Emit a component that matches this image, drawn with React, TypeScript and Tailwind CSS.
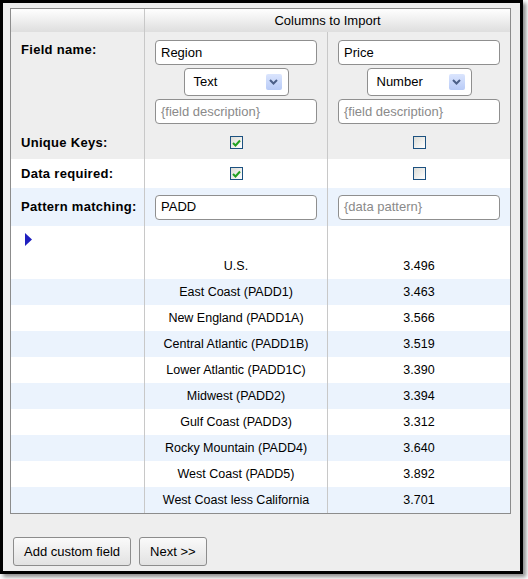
import React from 'react';

const rows: [string, string][] = [
  ['U.S.', '3.496'],
  ['East Coast (PADD1)', '3.463'],
  ['New England (PADD1A)', '3.566'],
  ['Central Atlantic (PADD1B)', '3.519'],
  ['Lower Atlantic (PADD1C)', '3.390'],
  ['Midwest (PADD2)', '3.394'],
  ['Gulf Coast (PADD3)', '3.312'],
  ['Rocky Mountain (PADD4)', '3.640'],
  ['West Coast (PADD5)', '3.892'],
  ['West Coast less California', '3.701'],
];

const TextBox = ({ value, placeholder }: { value?: string; placeholder?: string }) => (
  <div className="mx-[10px] flex h-[25px] items-center rounded-[4px] border border-[#8f8f8f] bg-white px-[5px] text-[13px]">
    {value ? <span className="text-black">{value}</span> : <span className="text-[#8a8a8a]">{placeholder}</span>}
  </div>
);

const Select = ({ value }: { value: string }) => (
  <div className="mx-auto flex h-[28px] w-[105px] items-center justify-between rounded-[4px] border border-[#8f8f8f] bg-white pl-[9px] pr-[6px] text-[13px]">
    <span>{value}</span>
    <span className="flex h-[16px] w-[16px] items-center justify-center rounded-[2px] bg-gradient-to-b from-[#dbe5fd] to-[#b8cbf7]">
      <svg width="9" height="6" viewBox="0 0 9 6">
        <path d="M1 1 L4.5 4.5 L8 1" fill="none" stroke="#4b5f88" strokeWidth="2" />
      </svg>
    </span>
  </div>
);

const Check = ({ checked }: { checked?: boolean }) => (
  <span className="flex h-[13px] w-[13px] items-center justify-center border border-[#1c5180] bg-gradient-to-br from-[#dcdcd6] to-white">
    {checked && (
      <svg width="9" height="8" viewBox="0 0 9 8">
        <path d="M1 4 L3.5 6.5 L8 1.5" fill="none" stroke="#21a121" strokeWidth="2" />
      </svg>
    )}
  </span>
);

const Label = ({ children, top, bg }: { children: React.ReactNode; top?: boolean; bg: string }) => (
  <div
    className={`border-r border-[#c8c8c8] pl-[10px] text-[13px] font-bold tracking-[0.3px] ${bg} ${top ? 'pt-[8px]' : 'flex items-center'}`}
  >
    {children}
  </div>
);

export default function App() {
  return (
    <div className="h-[579px] w-[528px] bg-white" style={{ fontFamily: '"Liberation Sans", Arial, sans-serif' }}>
      <div className="flex h-[574px] w-[523px] flex-col border-[3px] border-black bg-[#eeeeee] shadow-[3px_3px_4px_rgba(0,0,0,0.45)]">
        <div className="ml-[7px] mt-[5px] w-[501px] border border-[#8c8c8c] bg-white text-black">
          {/* header */}
          <div className="grid h-[23px] grid-cols-[134px_365px] bg-gradient-to-b from-white to-[#dedede]">
            <div className="border-r border-[#c8c8c8]" />
            <div className="flex items-center justify-center text-[13px]">Columns to Import</div>
          </div>

          <div className="grid grid-cols-[134px_183px_182px]">
            {/* field name */}
            <Label top bg="bg-[#eeeeee]">Field name:</Label>
            <div className="flex flex-col gap-[3px] border-r border-[#c8c8c8] bg-[#eeeeee] pb-[2px] pt-[8px]">
              <TextBox value="Region" />
              <Select value="Text" />
              <TextBox placeholder="{field description}" />
            </div>
            <div className="flex flex-col gap-[3px] bg-[#eeeeee] pb-[2px] pt-[8px]">
              <TextBox value="Price" />
              <Select value="Number" />
              <TextBox placeholder="{field description}" />
            </div>

            {/* unique keys */}
            <Label bg="bg-[#eeeeee]">Unique Keys:</Label>
            <div className="flex h-[33px] items-center justify-center border-r border-[#c8c8c8] bg-[#eeeeee]">
              <Check checked />
            </div>
            <div className="flex h-[33px] items-center justify-center bg-[#eeeeee]">
              <Check />
            </div>

            {/* data required */}
            <Label bg="bg-white">Data required:</Label>
            <div className="flex h-[29px] items-center justify-center border-r border-[#c8c8c8]">
              <Check checked />
            </div>
            <div className="flex h-[29px] items-center justify-center">
              <Check />
            </div>

            {/* pattern */}
            <Label bg="bg-[#ebf3fd]">Pattern matching:</Label>
            <div className="flex h-[38px] flex-col justify-center border-r border-[#c8c8c8] bg-[#ebf3fd]">
              <TextBox value="PADD" />
            </div>
            <div className="flex h-[38px] flex-col justify-center bg-[#ebf3fd]">
              <TextBox placeholder="{data pattern}" />
            </div>

            {/* arrow */}
            <div className="h-[27px] border-r border-[#c8c8c8] pl-[14px] pt-[7px]">
              <svg width="7" height="13" viewBox="0 0 7 13">
                <path d="M0 0 L7 6.5 L0 13 Z" fill="#1f1fbf" />
              </svg>
            </div>
            <div className="border-r border-[#c8c8c8]" />
            <div />

            {rows.map(([name, price], i) => {
              const bg = i % 2 === 1 ? 'bg-[#ebf3fd]' : 'bg-white';
              return (
                <React.Fragment key={name}>
                  <div className={`h-[26px] border-r border-[#c8c8c8] ${bg}`} />
                  <div className={`flex h-[26px] items-center justify-center border-r border-[#c8c8c8] text-[12.5px] ${bg}`}>
                    {name}
                  </div>
                  <div className={`flex h-[26px] items-center justify-center text-[12.5px] ${bg}`}>{price}</div>
                </React.Fragment>
              );
            })}
          </div>
        </div>

        <div className="ml-[10px] mt-[23px] flex gap-[8px]">
          <button className="h-[29px] rounded-[3px] border border-[#8c8c8c] bg-gradient-to-b from-[#fafafa] to-[#e2e2e2] px-[10px] text-[13px] text-black">
            Add custom field
          </button>
          <button className="h-[29px] rounded-[3px] border border-[#8c8c8c] bg-gradient-to-b from-[#fafafa] to-[#e2e2e2] px-[10px] text-[13px] text-black">
            Next &gt;&gt;
          </button>
        </div>
      </div>
    </div>
  );
}
